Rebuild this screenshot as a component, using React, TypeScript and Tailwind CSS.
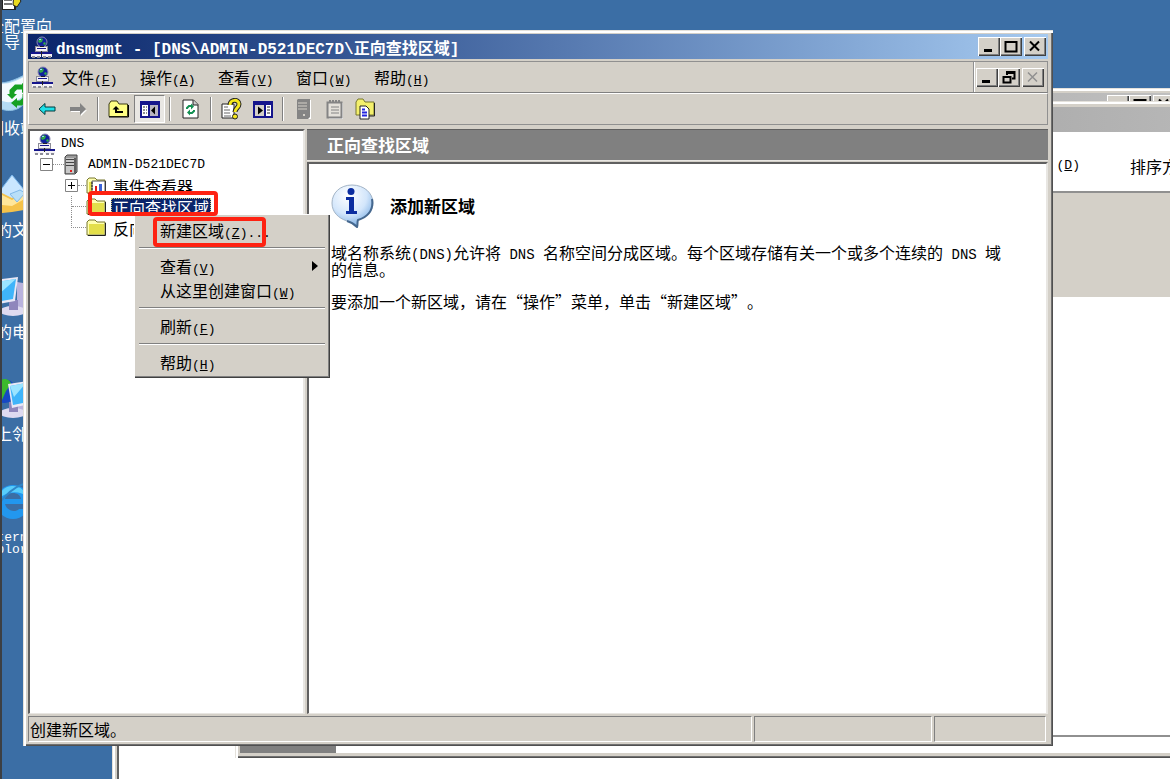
import React from 'react';
import clsx from 'clsx';

const raised = 'bg-[#d4d0c8] shadow-[inset_1px_1px_0_#fff,inset_-1px_-1px_0_#404040,inset_-2px_-2px_0_#808080]';
const windowFrame = 'bg-[#d4d0c8] shadow-[inset_1px_1px_0_#e4e1db,inset_3px_3px_0_#fff,inset_-1px_-1px_0_#505050,inset_-2px_-2px_0_#707070]';
const statusCell = 'border border-t-[#808080] border-l-[#808080] border-r-white border-b-white';

// Latin runs are half as wide as a Chinese character
const Latin: React.FC<{ children: React.ReactNode; className?: string }> = ({ children, className }) => (
  <span className={clsx('whitespace-pre font-["Liberation_Mono",monospace] leading-3', className ?? 'text-[13px]')}>{children}</span>
);

const Label: React.FC<{ text: string; hotkey: string; tail?: string }> = ({ text, hotkey, tail }) => (
  <span className="whitespace-nowrap">
    {text}
    <Latin>(<u>{hotkey}</u>){tail}</Latin>
  </span>
);

const NetworkIcon = () => (
  <svg width="21" height="22" viewBox="0 0 21 22" className="shrink-0" aria-hidden="true">
    <circle cx="11" cy="6" r="5" fill="#10209c" stroke="#8a8ab0" />
    <path d="M9 2l3 1-1 3-3 1-1-2zM12 7l2-1 1 2-2 1z" fill="#2fa64a" />
    <path d="M8 3h2v1H8z" fill="#9fd8ff" />
    <path d="M4 10h13v6H4z" fill="#8c8c98" />
    <path d="M5 11h11v4H5z" fill="#f4f2f6" />
    <path d="M6 12h9v1H6z" fill="#15158c" />
    <path d="M10 15h1v4h-1zM9 10h4v1H9z" fill="#222" />
    <path d="M0 16h10v5H0zM11 16h10v5H11z" fill="#f4f2f6" />
    <path d="M0 16h10v2H0zM11 16h10v2H11z" fill="#15158c" />
    <path d="M1 20h3v2H1zM6 20h3v2H6zM12 20h3v2h-3zM17 20h3v2h-3z" fill="#8c8c98" />
  </svg>
);

const FolderIcon: React.FC<{ chart?: boolean }> = ({ chart }) => (
  <svg width="21" height="18" viewBox="0 0 21 18" className="shrink-0" aria-hidden="true">
    <path d="M1 3l2-2h6l2 2h8v13H1z" fill="#ffffb0" stroke="#77772f" />
    <path d="M3 5h15v10H3z" fill="#e3df4a" />
    <path d="M19.500 4v12.500H2" fill="none" stroke="#222" />
    {chart && (
      <>
        <path d="M6 4h13v13H6z" fill="#fff" stroke="#555" />
        <path d="M9 9h2v7H9z" fill="#e01818" />
        <path d="M13 7h3v7h-3z" fill="#3a62d8" />
        <path d="M5 6h2M5 9h2M5 12h2M5 15h2" stroke="#222" />
      </>
    )}
  </svg>
);

const ServerIcon = () => (
  <svg width="14" height="21" viewBox="0 0 14 21" className="shrink-0" aria-hidden="true">
    <path d="M1 3l2-2h10v17l-2 2H1z" fill="#9b9b9b" stroke="#444" />
    <path d="M2 4h8v15H2z" fill="#c9c9c9" />
    <path d="M2 5.500h8M2 8.500h8M2 11.500h8" stroke="#444" />
    <path d="M6 16h2v2H6z" fill="#e02020" />
    <path d="M11 4v15" stroke="#222" />
  </svg>
);

const BackIcon = () => (
  <svg width="18" height="14" viewBox="0 0 18 14" aria-hidden="true">
    <path d="M1 7l6-5.500V5h10v4H7v3.500z" fill="#1fe0e8" stroke="#053a3c" />
  </svg>
);

const ForwardIcon = () => (
  <svg width="18" height="14" viewBox="0 0 18 14" aria-hidden="true">
    <path d="M18 8l-6 6v-4H2V9h10z" fill="#fff" />
    <path d="M17 7l-6-6v4H1v4h10v4z" fill="#848484" />
  </svg>
);

const UpIcon = () => (
  <svg width="21" height="18" viewBox="0 0 21 18" aria-hidden="true">
    <path d="M1 4l2-3h6l2 3h8.500v12.500H1z" fill="#ffff84" stroke="#3c3c14" />
    <path d="M1 17h19.500V5" fill="none" stroke="#000" />
    <path d="M8 6l-3.500 3.500H7V13h8v-2H9V9.500h2.500z" fill="#000" />
  </svg>
);

const TreePaneIcon = () => (
  <svg width="20" height="17" viewBox="0 0 20 17" aria-hidden="true">
    <path d="M0 0h20v17H0z" fill="#15158c" />
    <path d="M2 4h6v11H2z" fill="#fff" />
    <path d="M10 4h8v11h-8z" fill="#b8b4c0" />
    <path d="M3 6h2M3 9h2M3 12h2M6 6h1M6 9h1M6 12h1" stroke="#222" />
    <path d="M15 5.500v8l-4-4z" fill="#000" />
  </svg>
);

const ActionPaneIcon = () => (
  <svg width="20" height="17" viewBox="0 0 20 17" aria-hidden="true">
    <path d="M0 0h20v17H0z" fill="#15158c" />
    <path d="M2 4h9v11H2z" fill="#d4d0c8" />
    <path d="M13 4h5v11h-5z" fill="#fff" />
    <path d="M14 6h3M14 9h3M14 12h3" stroke="#222" />
    <path d="M5 5.500v8l5-4z" fill="#000" />
  </svg>
);

const RefreshIcon = () => (
  <svg width="17" height="20" viewBox="0 0 17 20" aria-hidden="true">
    <path d="M1 1h10.500L16 5.500V19H1z" fill="#fff" stroke="#222" />
    <path d="M11 1v5h5" fill="#ccc" stroke="#222" />
    <path d="M5 10V9l2-2h3" fill="none" stroke="#129052" strokeWidth="2" />
    <path d="M9 4.500l3 3-3 3zM8 10.500l-3 3 3 3z" fill="#129052" />
    <path d="M8 14h2l2-2v-1" fill="none" stroke="#129052" strokeWidth="2" />
  </svg>
);

const HelpIcon = () => (
  <svg width="21" height="22" viewBox="0 0 21 22" aria-hidden="true">
    <path d="M1 6h12v14H1z" fill="#fff" stroke="#222" />
    <path d="M3 9h4M3 12h6M3 15h6M3 18h7" stroke="#666" />
    <path d="M9 7c0-6 9-6 9-1 0 4-4 4-4 8" fill="none" stroke="#222" strokeWidth="5" />
    <path d="M9 7c0-6 9-6 9-1 0 4-4 4-4 8" fill="none" stroke="#f6e81c" strokeWidth="3" />
    <circle cx="14" cy="18.500" r="2.500" fill="#f6e81c" stroke="#222" />
  </svg>
);

const GrayServerIcon = () => (
  <svg width="16" height="22" viewBox="0 0 16 22" aria-hidden="true">
    <path d="M2 2h13v19H3z" fill="#fff" />
    <path d="M1 2l1-1h12v18l-2 2H1z" fill="#848484" />
    <path d="M2 5h9M2 8h9M2 11h9" stroke="#d4d0c8" />
    <path d="M7 16h2v2H7z" fill="#d4d0c8" />
  </svg>
);

const GrayListIcon = () => (
  <svg width="18" height="21" viewBox="0 0 18 21" aria-hidden="true">
    <path d="M3 4h14v16H3z" fill="#fff" />
    <path d="M1.500 3.500h14v15h-14z" fill="#e4e1da" stroke="#848484" strokeWidth="2" />
    <path d="M4 1v3M7 1v3M10 1v3M13 1v3" stroke="#848484" strokeWidth="2" />
    <path d="M5 8h8M5 11h8M5 14h8" stroke="#848484" />
  </svg>
);

const FolderDocIcon = () => (
  <svg width="21" height="22" viewBox="0 0 21 22" aria-hidden="true">
    <path d="M1 4l2-3h5l2 3h9v13H1z" fill="#f4f06c" stroke="#77772f" />
    <path d="M19.500 5v13H8" fill="none" stroke="#222" />
    <path d="M5 8h6l3 3v10H5z" fill="#fff" stroke="#222" />
    <path d="M7 11.500h3M7 14.500h5M7 17.500h5" stroke="#2424e0" strokeWidth="2" />
  </svg>
);

const InfoIcon = () => (
  <svg width="43" height="44" viewBox="0 0 43 44" className="shrink-0" aria-hidden="true">
    <defs>
      <radialGradient id="bubble" cx="40%" cy="25%" r="75%">
        <stop offset="0" stopColor="#fff" />
        <stop offset="0.6" stopColor="#d3e6fb" />
        <stop offset="1" stopColor="#7fb0e4" />
      </radialGradient>
    </defs>
    <path d="M21 1C9 1 1 9 1 19c0 9 6 15 15 18 4 1 7 3 10 6 1-3 0-5 1-7 9-3 15-9 15-17C42 9 33 1 21 1z" fill="url(#bubble)" stroke="#a3b4c6" />
    <path d="M41 15c2 12-5 18-14 21-1 2 0 4-1 7-3-3-6-5-10-6" fill="none" stroke="#45688f" strokeWidth="2" />
    <circle cx="20" cy="7.500" r="3.500" fill="#0b2da0" />
    <path d="M15 13h8v14h3v3H15v-3h3V16h-3z" fill="#0b2da0" />
  </svg>
);

const RecycleIcon = () => (
  <svg width="40" height="40" viewBox="0 0 40 40" aria-hidden="true">
    <path d="M2 10c8 3 20-1 34-9l-3 29c-6 10-20 11-29 4z" fill="#b4dbf4" stroke="#8fc0e4" />
    <path d="M2 10c9 4 20 1 33-7l-3 20c-8 9-20 9-28 3z" fill="#f3fafe" />
    <path d="M20 24v-5l4-4h7M33 22v5l-4 4h-5" fill="none" stroke="#16a022" strokeWidth="5" />
    <path d="M30 11l7 5-7 5zM25 26v10l-6-5zM15 22h10l-5 5z" fill="#16a022" />
  </svg>
);

const DocumentsIcon = () => (
  <svg width="40" height="40" viewBox="0 0 40 40" aria-hidden="true">
    <path d="M20 1l13 16-12 14L7 18z" fill="#c9e6ff" stroke="#7bb7ec" />
    <path d="M0 14l20 10 18-10v21L20 38 0 40z" fill="#f5c24a" />
    <path d="M0 16l20 10 18-10v6L20 32 0 30z" fill="#ffe69a" />
    <path d="M18 20l10-4 5 3-8 9z" fill="#b9dff8" stroke="#80b9e9" />
  </svg>
);

const ComputerIcon: React.FC<{ globe?: boolean }> = ({ globe }) => (
  <svg width="40" height="40" viewBox="0 0 40 40" aria-hidden="true">
    <path d="M25 6l12 2v28l-12 3z" fill="#b9b3dd" />
    {globe && <circle cx="12" cy="13" r="12" fill="#1648c4" />}
    {globe && <path d="M3 6c6-7 15-6 16 0l-5 7-4 9c-7 0-9-9-7-16z" fill="#3cb82d" />}
    <ellipse cx="21" cy="35" rx="13" ry="5" fill="#dedaf0" />
    <path d="M17 24h9v10h-9z" fill="#8f86bc" />
    <path d={globe ? 'M16 6l20-3-3 24-13 3z' : 'M2 4l24-3-3 24-21 4z'} fill="#e8e8f6" />
    <path d={globe ? 'M18 8l16-3-3 20-10 2z' : 'M4 6l20-3-3 20-17 3z'} fill="#3fb4fa" />
    <path d={globe ? 'M18 8l16-3-12 14z' : 'M4 6l20-3L5 20z'} fill="#9be4ff" />
  </svg>
);

const ExplorerIcon = () => (
  <svg width="40" height="40" viewBox="0 0 40 40" aria-hidden="true">
    <circle cx="21" cy="22" r="17" fill="#2297ee" />
    <path d="M6 19a15 15 0 0 1 29-3c-9-6-20-5-29 3z" fill="#58cdfb" />
    <path d="M13 19c1-8 15-8 16 0z" fill="#3b6ea5" />
    <path d="M13 24h27v5H27c-4 4-12 2-14-5z" fill="#3b6ea5" />
    <path d="M3 38C-2 30 20 4 37 3" fill="none" stroke="#2f86c8" strokeWidth="2" />
  </svg>
);

const WizardIcon = () => (
  <svg width="40" height="40" viewBox="0 0 40 40" aria-hidden="true">
    <path d="M10 18h13v22H10z" fill="#fff" stroke="#222" strokeWidth="2" />
    <path d="M12 34h8M12 30h8" stroke="#777" strokeWidth="2" />
    <path d="M22 22l7 9-4 6-4-2z" fill="#eadb20" stroke="#222" />
  </svg>
);

const desktopIcons = [
  { icon: <WizardIcon />, lines: ['安全配置向', '导'] },
  { icon: <RecycleIcon />, lines: ['回收站'] },
  { icon: <DocumentsIcon />, lines: ['我的文档'] },
  { icon: <ComputerIcon />, lines: ['我的电脑'] },
  { icon: <ComputerIcon globe />, lines: ['网上邻居'] },
  { icon: <ExplorerIcon />, lines: ['Internet', 'Explorer'], latin: true },
];

const menus = [
  { text: '文件', hotkey: 'F' },
  { text: '操作', hotkey: 'A' },
  { text: '查看', hotkey: 'V' },
  { text: '窗口', hotkey: 'W' },
  { text: '帮助', hotkey: 'H' },
];

const toolbar = [
  [
    { name: '后退', icon: <BackIcon /> },
    { name: '前进', icon: <ForwardIcon /> },
  ],
  [
    { name: '向上', icon: <UpIcon /> },
    { name: '控制台树', icon: <TreePaneIcon />, pressed: true },
  ],
  [{ name: '刷新', icon: <RefreshIcon /> }],
  [
    { name: '帮助', icon: <HelpIcon /> },
    { name: '操作窗格', icon: <ActionPaneIcon /> },
  ],
  [
    { name: '服务器', icon: <GrayServerIcon /> },
    { name: '记录', icon: <GrayListIcon /> },
    { name: '新建', icon: <FolderDocIcon /> },
  ],
];

const contextMenu = [
  [{ text: '新建区域', hotkey: 'Z', tail: '...' }],
  [
    { text: '查看', hotkey: 'V', submenu: true },
    { text: '从这里创建窗口', hotkey: 'W' },
  ],
  [{ text: '刷新', hotkey: 'F' }],
  [{ text: '帮助', hotkey: 'H' }],
];

type Glyph = 'min' | 'max' | 'restore' | 'close';

const WindowButton: React.FC<{ glyph: Glyph; disabled?: boolean }> = ({ glyph, disabled }) => (
  <button
    aria-label={glyph}
    disabled={disabled}
    className={clsx('flex h-[19px] w-[22px] shrink-0 items-center justify-center', raised, disabled ? 'text-[#909090]' : 'text-black')}
  >
    <svg width="14" height="13" viewBox="0 0 14 13" fill="none" stroke="currentColor" aria-hidden="true">
      {glyph === 'min' && <path d="M2 10.500h8" strokeWidth="3" />}
      {glyph === 'max' && <path d="M1.500 1v10.500h11V1M1 2h12" strokeWidth="2" />}
      {glyph === 'restore' && <path d="M5 4V1h7.500v6.500H10M5 2h7M1.500 5v6.500h7V5M1 6h8" strokeWidth="2" />}
      {glyph === 'close' && <path d="M2 1.500l9 9M11 1.500l-9 9" strokeWidth={disabled ? 1.5 : 2} />}
    </svg>
  </button>
);

const Expander: React.FC<{ open?: boolean }> = ({ open }) => (
  <svg width="13" height="13" viewBox="0 0 13 13" className="shrink-0" aria-hidden="true">
    <path d="M.5.5h12v12H.5z" fill="#fff" stroke="#848484" />
    <path d={open ? 'M3 6.500h7' : 'M3 6.500h7M6.500 3v7'} stroke="#000" />
  </svg>
);

const BackgroundWindows = () => (
  <>
    <div className={clsx('absolute top-[88px] -right-[10px] -bottom-2 left-[112px] flex flex-col p-[5px]', windowFrame)}>
      <div className="flex h-6 shrink-0 items-start justify-end bg-linear-to-r from-[#808080] to-[#c0c0c0] pt-[2px]">
        <WindowButton glyph="min" />
        <WindowButton glyph="max" />
        <span className="w-[2px]" />
        <WindowButton glyph="close" />
      </div>
      <div className="flex-1 border-l-2 border-[#606060] bg-white" />
    </div>
    <div className={clsx('absolute top-[101px] -right-10 bottom-[21px] left-[235px] flex flex-col pt-[6px] pb-[5px] pl-[5px]', windowFrame)}>
      <div className="h-[25px] shrink-0 bg-linear-to-r from-[#808080] to-[#b8b8b8]" />
      <div className="flex h-[61px] shrink-0 items-center justify-end gap-[50px] border-b-2 border-[#909090] bg-white pt-2 pr-8">
        <Latin>(<u>D</u>)</Latin>
        <span>排序方</span>
      </div>
      <div className="h-[104px] shrink-0 bg-[#d4d0c8]" />
      <div className="flex-1 border-b-2 border-[#909090] bg-white" />
      <div className="flex h-4 shrink-0 bg-white">
        <div className="w-24 bg-[#808080]" />
      </div>
    </div>
  </>
);

const ConsoleTree = () => (
  <ul className="w-[277px] shrink-0 overflow-hidden border-t-2 border-r-2 border-b border-l-2 border-t-[#606060] border-r-[#e8e6e2] border-b-[#e8e6e2] border-l-[#606060] bg-white pt-[2px] pl-1">
    <li>
      <button className="flex h-[21px] items-center gap-[6px]">
        <NetworkIcon />
        <Latin>DNS</Latin>
      </button>
      <ul className="pl-[6px]">
        <li>
          <button className="flex h-[21px] items-center">
            <Expander open />
            <span className="w-[11px] border-t border-dotted border-[#909090]" />
            <ServerIcon />
            <Latin className="pl-[10px] text-[13px]">ADMIN-D521DEC7D</Latin>
          </button>
          <ul className="pl-[25px]">
            <li>
              <button className="flex h-[21px] items-center">
                <Expander />
                <span className="w-2 border-t border-dotted border-[#909090]" />
                <FolderIcon chart />
                <span className="pl-[6px] leading-4">事件查看器</span>
              </button>
            </li>
            <li className="ml-[6px] border-l border-dotted border-[#909090]">
              <button className="flex h-[21px] items-center">
                <span className="w-[14px] border-t border-dotted border-[#909090]" />
                <FolderIcon />
                <span className="ml-1 border border-dotted border-[#d8c878] bg-[#0a246a] px-[1px] leading-4 text-white">正向查找区域</span>
              </button>
            </li>
            <li className="ml-[6px] flex items-start">
              <span className="h-[11px] w-[15px] border-b border-l border-dotted border-[#909090]" />
              <button className="flex h-[21px] items-center">
                <FolderIcon />
                <span className="pl-[6px] leading-4">反向查找区域</span>
              </button>
            </li>
          </ul>
        </li>
      </ul>
    </li>
  </ul>
);

const DetailPane = () => (
  <section className="flex min-w-0 flex-1 flex-col">
    <h2 className="flex h-8 shrink-0 items-center border-t border-b border-t-[#606060] border-b-[#e8e6e2] bg-[#808080] pl-5 text-[17px] font-bold text-white">正向查找区域</h2>
    <div className="mt-[1px] flex-1 border-t-2 border-r-2 border-b border-l-2 border-t-[#606060] border-r-[#e8e6e2] border-b-[#e8e6e2] border-l-[#606060] bg-white pt-5 pr-10 pl-[22px]">
      <div className="flex items-center gap-4">
        <InfoIcon />
        <h3 className="text-[17px] font-bold">添加新区域</h3>
      </div>
      <p className="mt-4 leading-4">
        域名称系统<Latin className="text-sm/3">(DNS)</Latin>允许将<Latin className="text-sm/3"> DNS </Latin>名称空间分成区域。每个区域存储有关一个或多个连续的<Latin className="text-sm/3"> DNS </Latin>域的信息。
      </p>
      <p className="mt-4 leading-4">要添加一个新区域，请在“操作”菜单，单击“新建区域”。</p>
    </div>
  </section>
);

const ConsoleWindow = () => (
  <main className={clsx('absolute top-[30px] right-[117px] bottom-[33px] left-[23px] flex flex-col px-[5px] pt-1 pb-[4px]', windowFrame)}>
    <header className="flex h-[25px] shrink-0 items-center bg-linear-to-r from-[#0a246a] to-[#a6caf0] pr-[2px] pl-[3px] text-white">
      <NetworkIcon />
      <h1 className="flex-1 truncate pl-1 text-base font-bold">
        <Latin className="text-base">dnsmgmt - [DNS\ADMIN-D521DEC7D\</Latin>正向查找区域<Latin className="text-base">]</Latin>
      </h1>
      <WindowButton glyph="min" />
      <WindowButton glyph="max" />
      <span className="w-[2px]" />
      <WindowButton glyph="close" />
    </header>

    <nav className="mt-[2px] flex h-8 shrink-0 items-center border border-t-[#909090] border-r-[#909090] border-b-[#808080] border-l-[#909090] pr-[3px] pl-[3px]">
      <NetworkIcon />
      {menus.map((menu) => (
        <button key={menu.hotkey} className="w-[78px] pl-[9px] text-left">
          <Label text={menu.text} hotkey={menu.hotkey} />
        </button>
      ))}
      <div className="ml-auto flex h-full items-center border-l border-[#909090] pl-[2px] shadow-[inset_1px_0_0_#fff]">
        <WindowButton glyph="min" />
        <WindowButton glyph="restore" />
        <span className="w-[2px]" />
        <WindowButton glyph="close" disabled />
      </div>
    </nav>

    <div className="flex h-8 shrink-0 items-center border border-t-white border-r-[#909090] border-b-[#909090] border-l-white pl-[2px]">
      {toolbar.map((group, index) => (
        <React.Fragment key={index}>
          {index > 0 && (
            <span className="flex w-[10px] shrink-0 justify-center">
              <span className="h-6 w-[2px] border-r border-l border-r-white border-l-[#808080]" />
            </span>
          )}
          {group.map((tool) => (
            <button
              key={tool.name}
              aria-label={tool.name}
              className={clsx(
                'flex h-7 w-[31px] shrink-0 items-center justify-center',
                tool.pressed && 'border border-t-[#808080] border-r-white border-b-white border-l-[#808080] bg-[#e9e7e3]'
              )}
            >
              {tool.icon}
            </button>
          ))}
        </React.Fragment>
      ))}
    </div>

    <div className="mt-1 flex min-h-0 flex-1 gap-[2px]">
      <ConsoleTree />
      <DetailPane />
    </div>

    <footer className="mt-[2px] flex h-[26px] shrink-0 gap-[2px] pr-[2px]">
      <div className={clsx('flex flex-1 items-center pl-[1px] leading-4', statusCell)}>创建新区域。</div>
      <div className={clsx('w-[178px]', statusCell)} />
      <div className={clsx('w-28', statusCell)} />
    </footer>
  </main>
);

const ContextMenu = () => (
  <div role="menu" className={clsx('absolute top-[214px] left-[134px] w-[196px] p-1', raised)}>
    {contextMenu.map((group, index) => (
      <React.Fragment key={index}>
        {index > 0 && <div className="mx-[1px] my-[5px] h-[2px] border-t border-b border-t-[#808080] border-b-white" />}
        {group.map((item) => (
          <button key={item.text} role="menuitem" className="flex h-6 w-full items-center justify-between pr-2 pl-[22px] text-left">
            <Label text={item.text} hotkey={item.hotkey} tail={'tail' in item ? item.tail : undefined} />
            {'submenu' in item && (
              <svg width="6" height="10" viewBox="0 0 6 10" aria-hidden="true">
                <path d="M0 0l6 5-6 5z" fill="#000" />
              </svg>
            )}
          </button>
        ))}
      </React.Fragment>
    ))}
  </div>
);

export default function App() {
  return (
    <div lang="zh-CN" className='relative h-screen overflow-hidden bg-[#3b6ea5] font-["Noto_Sans_CJK_SC",sans-serif] text-base leading-5 text-black [text-spacing-trim:space-all]'>
      <div className="absolute -top-[30px] -left-7 flex w-20 flex-col">
        {desktopIcons.map((item) => (
          <button key={item.lines[0]} className="flex h-[102px] flex-col items-center text-white">
            {item.icon}
            <span className={clsx('flex flex-col items-center leading-4 whitespace-nowrap', item.latin ? 'mt-3' : 'mt-[7px]')}>
              {item.lines.map((line) => (item.latin ? <Latin key={line} className="text-[13px]/4">{line}</Latin> : <span key={line}>{line}</span>))}
            </span>
          </button>
        ))}
      </div>
      <div className="absolute inset-y-0 left-0 w-[2px] bg-[#3c3f43]" />
      <BackgroundWindows />
      <ConsoleWindow />
      <ContextMenu />
      {/* Highlight marks for the two steps */}
      <div className="pointer-events-none absolute top-[191px] left-[88px] h-[25px] w-[130px] rounded-sm border-4 border-[#fe2212]" />
      <div className="pointer-events-none absolute top-[217px] left-[153px] h-[30px] w-[113px] rounded-sm border-4 border-[#fe2212]" />
    </div>
  );
}
